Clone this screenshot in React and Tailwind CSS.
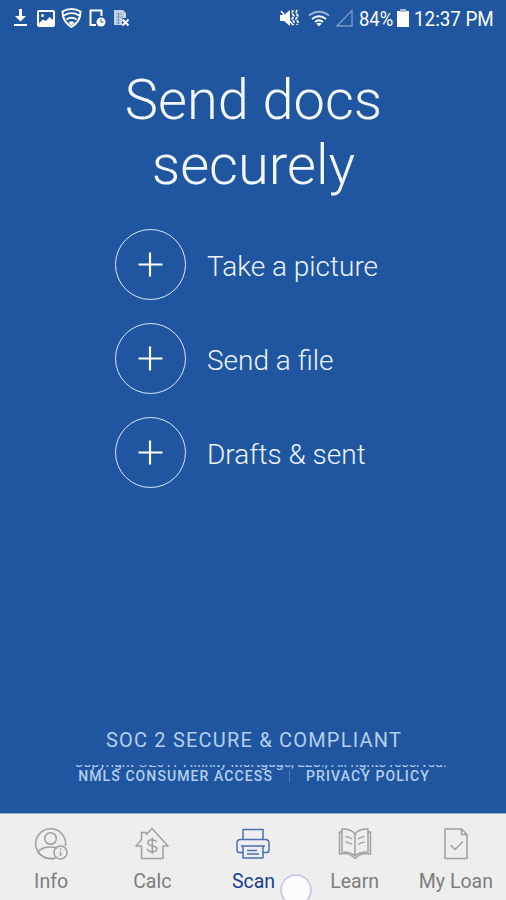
import React from "react";

const actions = ["Take a picture", "Send a file", "Drafts & sent"];

// Icons on the left and right of the phone status bar
function StatusBar() {
  return (
    <div className="flex h-9 shrink-0 items-center pl-[13px] text-white">
      <div className="flex w-[267px] shrink-0 items-center gap-[7px]">
        <svg width="15" height="18" viewBox="0 0 15 18" fill="currentColor">
          <path d="M6 0h3v7h4l-5.500 5.500L2 7h4zM1 15h13v2H1z" />
        </svg>
        <svg className="ml-[2px]" width="18" height="17" viewBox="0 0 18 17">
          <rect x="1" y="1" width="16" height="15" rx="1" fill="none" stroke="currentColor" strokeWidth="2" />
          <path d="M2 13l4-3.500 3 1.500 3.500-4L16 10v5H2z" fill="currentColor" />
          <circle cx="5.500" cy="5.500" r="1.500" fill="currentColor" />
        </svg>
        <svg className="-ml-px" width="21" height="20" viewBox="0 0 21 20" fill="none" stroke="currentColor" strokeWidth="2">
          <path d="M10.500 1C7 1 4 2 1.500 3.500c0 7.500 3 12 9 15.500 6-3.500 9-8 9-15.500C17 2 14 1 10.500 1z" />
          <path d="M3 7.500c4.500-3 10.500-3 15 0M5.500 11.500c3-2 7-2 10 0" />
          <path d="M8 14.500c1.500-1 3.500-1 5 0l-2.500 2.500z" fill="currentColor" strokeWidth="1" />
        </svg>
        <svg width="17" height="18" viewBox="0 0 17 18">
          <path d="M7 16H1.500V1.500h11V7" fill="none" stroke="currentColor" strokeWidth="2" />
          <circle cx="12" cy="13" r="4.500" fill="currentColor" />
          <path d="M12 10v3h2.500" fill="none" stroke="#1f569f" strokeWidth="1" />
        </svg>
        <svg width="17" height="18" viewBox="0 0 17 18">
          <path d="M1 1h9l3 3v5H9v7H1z" fill="currentColor" fillOpacity="0.75" />
          <path d="M3 5h7M3 8h7M3 11h4M3 14h4M5.500 4v11" stroke="#1f569f" strokeOpacity="0.4" />
          <path d="M9.500 10.500l6 6M15.500 10.500l-6 6" stroke="currentColor" strokeWidth="2" />
        </svg>
      </div>
      <svg width="19" height="18" viewBox="0 0 19 18">
        <path d="M0 6h4l6-5v16l-6-5H0z" fill="currentColor" />
        <path d="M1 2l12 14" stroke="currentColor" strokeWidth="1.500" />
        <path d="M13 1l-1 3 2 3-2 3 2 3-1 3M17 1l-1 3 2 3-2 3 2 3-1 3" fill="none" stroke="currentColor" strokeWidth="1.800" strokeDasharray="3 1" />
      </svg>
      <svg className="ml-[9px]" width="22" height="17" viewBox="0 0 22 17" fill="none" stroke="currentColor" strokeWidth="2">
        <path d="M1 5.500c6-5 14-5 20 0" strokeOpacity="0.55" />
        <path d="M4 9c4.500-3.500 9.500-3.500 14 0M7 12c2.500-2 5.500-2 8 0" />
        <path d="M9 13.500h4L11 16z" fill="currentColor" strokeWidth="1" />
      </svg>
      <svg className="ml-[6px]" width="17" height="18" viewBox="0 0 17 18">
        <path d="M1 17L16 1.500V17z" fill="none" stroke="currentColor" strokeOpacity="0.4" strokeWidth="1.300" />
      </svg>
      <span className="ml-[6px] w-[38px] origin-left scale-x-[0.92] whitespace-nowrap pt-px text-[20px] leading-5">
        84%
      </span>
      <svg width="12" height="18" viewBox="0 0 12 18">
        <path d="M3 0h6v2h3v16H0V2h3z" fill="currentColor" />
        <path d="M3 0h6v3H3z" fill="#1f569f" fillOpacity="0.4" />
      </svg>
      <span className="ml-[5px] origin-left scale-x-[0.94] whitespace-nowrap pt-px text-[20px] leading-5">
        12:37 PM
      </span>
    </div>
  );
}

function ActionRow({ label }) {
  return (
    <button type="button" className="flex items-center gap-[21px] text-left">
      <span className="flex size-[71px] items-center justify-center rounded-full border-[1.5px] border-[#d9e7fb]">
        <svg width="25" height="25" viewBox="0 0 25 25" stroke="white" strokeWidth="2.200">
          <path d="M12 0.500v24M0.500 12.500h24" />
        </svg>
      </span>
      <span className="pt-[5px] text-[28px] font-light leading-9 text-[#edf3fe]">{label}</span>
    </button>
  );
}

const iconProps = {
  width: 36,
  height: 36,
  viewBox: "0 0 36 36",
  fill: "none",
  stroke: "currentColor",
  strokeWidth: 1.5,
  strokeLinejoin: "round",
};

function InfoIcon() {
  return (
    <svg {...iconProps}>
      <path d="M22.500 32A15 15 0 1 1 32.500 20" />
      <circle cx="17.500" cy="12.500" r="5.800" />
      <path d="M5 26c3-4 7-5 12.500-5 3 0 5 .5 6.500 1.300M5 26c4 5 9 7 15 6.500" />
      <circle cx="27.500" cy="26.500" r="6.500" />
      <path d="M27.500 25.500v4.500M27.500 22.500v1.500" />
    </svg>
  );
}

function CalcIcon() {
  return (
    <svg {...iconProps}>
      <path d="M7.500 32.500V20H2L7.500 13.500V6.500h5V8.500L18 2.500 34 20h-5v12.500z" />
      <path d="M22.500 16c-.8-1.500-2.300-2.200-4.500-2.200-2.500 0-4.200 1-4.200 3 0 4.500 9 2 9 6 0 2-2 3-4.500 3s-4.500-1-5-2.800M18.300 11.500v16.500" />
    </svg>
  );
}

function ScanIcon() {
  return (
    <svg {...iconProps}>
      <path d="M8 13.500V3.500h20v10" />
      <path d="M8 26.500H4.500c-1.500 0-2.500-1-2.500-2.500v-7C2 15 3.500 13.500 5.500 13.500h25c2 0 3.500 1.500 3.500 3.500v7c0 1.500-1 2.500-2.500 2.500H28" />
      <path d="M8 20h20v12H8zM6 20h24M12 24.500h10M12 28h12" />
    </svg>
  );
}

function LearnIcon() {
  return (
    <svg {...iconProps}>
      <path d="M18 8c-2-3-6-5-13-5v23c6 0 10 1 13 4 3-3 7-4 13-4V3c-7 0-11 2-13 5zM18 8v22" />
      <path d="M5 6H2.500v22c6-1 10 0 12.500 2l3 2.500 3-2.500c2.500-2 6.500-3 12.500-2V6H31" />
      <path d="M8.500 10.500c2.500.3 4.500 1 6.500 2.500M8.500 16c2.500.3 4.500 1 6.500 2.500M27.500 10.500c-2.500.3-4.500 1-6.500 2.500M27.500 16c-2.500.3-4.500 1-6.500 2.500" />
    </svg>
  );
}

function LoanIcon() {
  return (
    <svg {...iconProps}>
      <path d="M7 3H23.500l5.500 5.500v24H7zM23.500 3v5.500H29" />
      <path d="M12.500 19l4.500 4.500 8-8" />
    </svg>
  );
}

const tabs = [
  { label: "Info", Icon: InfoIcon },
  { label: "Calc", Icon: CalcIcon },
  { label: "Scan", Icon: ScanIcon, active: true },
  { label: "Learn", Icon: LearnIcon },
  { label: "My Loan", Icon: LoanIcon },
];

function TabBar() {
  return (
    <nav className="relative grid h-[87px] shrink-0 grid-cols-5 overflow-hidden border-t border-[#8fabd0] bg-[#eeeeee]">
      {tabs.map(({ label, Icon, active }) => (
        <div
          key={label}
          className={`flex flex-col items-center pl-px pt-[12px] ${active ? "text-[#4a70b4]" : "text-[#a0a0a0]"}`}
        >
          <Icon />
          <span
            className={`mt-[8px] whitespace-nowrap text-[19.500px] leading-6 ${active ? "text-[#173f93]" : "text-[#7d7d7d]"}`}
          >
            {label}
          </span>
        </div>
      ))}
      {/* touch point */}
      <span className="absolute left-[280px] top-[60px] size-8 rounded-full border-2 border-[#cfc9ea] bg-[#fcfcff]" />
    </nav>
  );
}

export default function App() {
  return (
    <div className="flex h-[900px] w-[506px] flex-col overflow-hidden bg-[#1f569f] font-['Roboto',sans-serif]">
      <StatusBar />
      <main className="flex flex-1 flex-col">
        <h1 className="mt-[32px] pl-px text-center text-[56px] font-light leading-[65px] text-[#f5f9ff]">
          Send docs
          <br />
          securely
        </h1>
        <div className="mt-[31px] flex flex-col gap-[23px] pl-[115px]">
          {actions.map((label) => (
            <ActionRow key={label} label={label} />
          ))}
        </div>
        <footer className="mt-auto flex flex-col items-center pb-[29px] text-[#b5cff0]">
          <p className="pl-[2px] text-[20px] leading-6 tracking-[1.2px]">SOC 2 SECURE &amp; COMPLIANT</p>
          {/* only the bottom of this line shows above the links */}
          <div className="mt-[13px] flex h-[7px] items-end justify-center overflow-hidden pb-[3px] pl-[15px]">
            <p className="whitespace-nowrap text-[14px] leading-[14px]">
              Copyright ©2017 Affinity Mortgage, LLC., All rights reserved.
            </p>
          </div>
          <div className="-mt-[4px] flex items-center pl-[2px] text-[14px] font-medium leading-4 tracking-[1.1px]">
            <span>NMLS CONSUMER ACCESS</span>
            <span className="mx-[16px] h-3 w-px bg-[#4f78b2]" />
            <span>PRIVACY POLICY</span>
          </div>
        </footer>
      </main>
      <TabBar />
    </div>
  );
}
